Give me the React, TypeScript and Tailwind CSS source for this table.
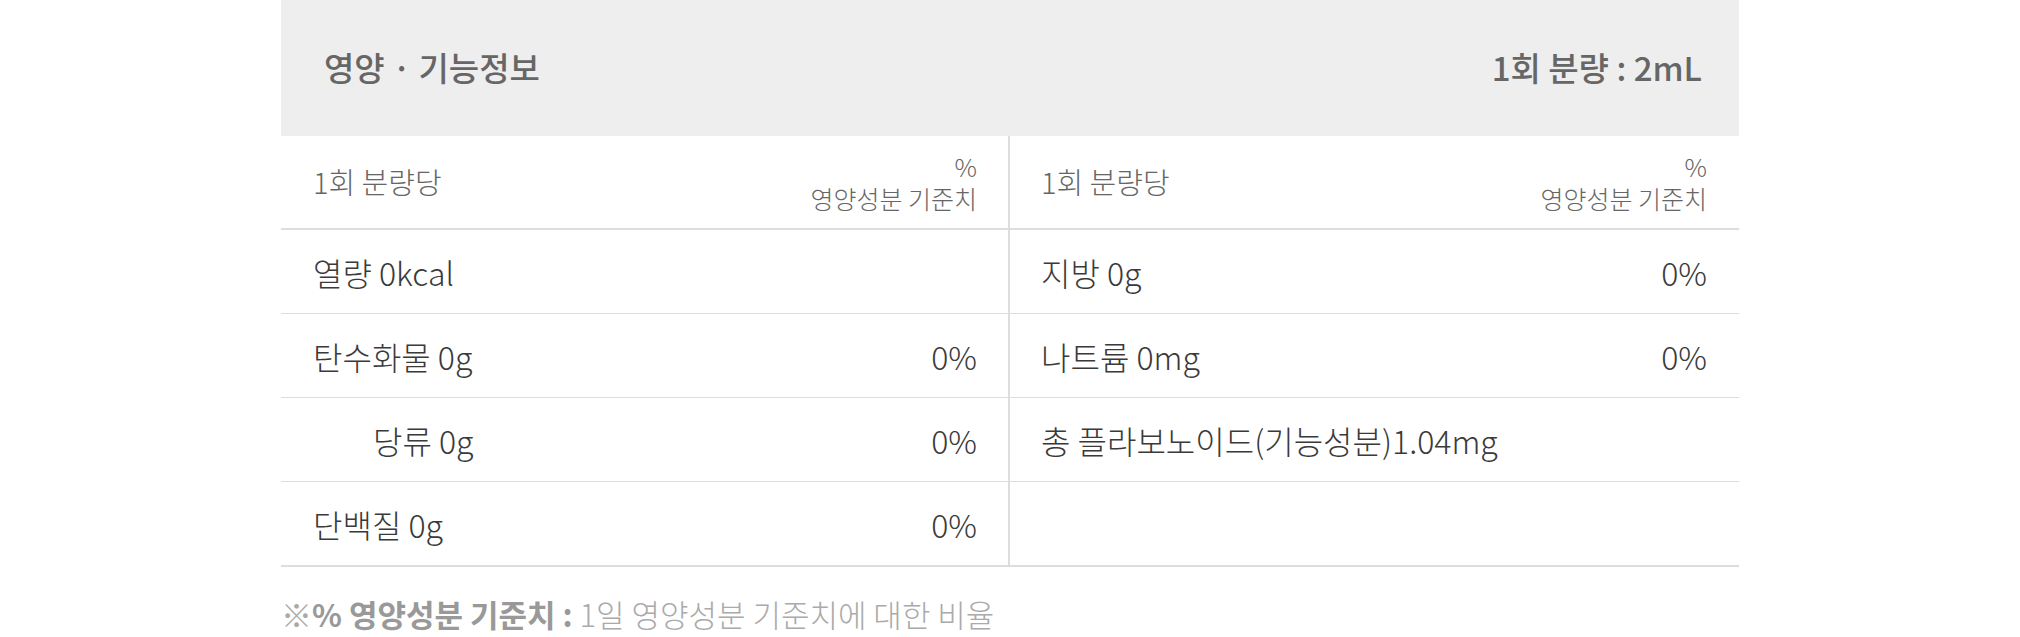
const rowsLeft = [
  { name: '열량 0kcal', pct: '' },
  { name: '탄수화물 0g', pct: '0%' },
  { name: '당류 0g', pct: '0%', indent: true },
  { name: '단백질 0g', pct: '0%' },
];

const rowsRight = [
  { name: '지방 0g', pct: '0%' },
  { name: '나트륨 0mg', pct: '0%' },
  { name: '총 플라보노이드(기능성분)1.04mg', pct: '' },
  { name: '', pct: '' },
];

const font = { fontFamily: '"Noto Sans CJK KR", "Noto Sans", sans-serif' };

const Cell = ({ name, pct, indent, left }: { name: string; pct: string; indent?: boolean; left?: boolean }) => (
  <div
    className={`flex items-center justify-between h-[83px] text-[32px] font-light text-[#3a3a3a] ${
      left ? 'pl-[32px] pr-[31px] border-r-2 border-[#dddddd]' : 'pl-[31px] pr-[32px]'
    }`}
  >
    <span className={indent ? 'pl-[60px]' : ''}>{name}</span>
    <span>{pct}</span>
  </div>
);

const ColHead = ({ left }: { left?: boolean }) => (
  <div
    className={`flex items-center justify-between h-[92px] text-[#666] font-light ${
      left ? 'pl-[32px] pr-[31px] border-r-2 border-[#dddddd]' : 'pl-[31px] pr-[32px]'
    }`}
  >
    <span className="text-[29px]">1회 분량당</span>
    <div className="flex flex-col items-end text-[25px] leading-[32px]">
      <span>%</span>
      <span>영양성분 기준치</span>
    </div>
  </div>
);

export default function App() {
  return (
    <div className="min-h-screen bg-white" style={font}>
      <div className="mx-auto w-[1458px]">
        <div className="flex items-center justify-between h-[136px] bg-[#eeeeee] pl-[43px] pr-[37px] text-[33px] font-medium text-[#666]">
          <span>영양 · 기능정보</span>
          <span>1회 분량 : 2mL</span>
        </div>

        <div className="grid grid-cols-2 border-b-2 border-[#dddddd]">
          <ColHead left />
          <ColHead />
        </div>

        {rowsLeft.map((l, i) => (
          <div
            key={i}
            className={`grid grid-cols-2 border-[#dddddd] ${i === rowsLeft.length - 1 ? 'border-b-2' : 'border-b'}`}
          >
            <Cell {...l} left />
            <Cell {...rowsRight[i]} />
          </div>
        ))}

        <p className="mt-[24px] text-[31px] font-light text-[#aaa]">
          ※<span className="font-bold text-[#999]">% 영양성분 기준치 :</span> 1일 영양성분 기준치에 대한 비율
        </p>
      </div>
    </div>
  );
}
